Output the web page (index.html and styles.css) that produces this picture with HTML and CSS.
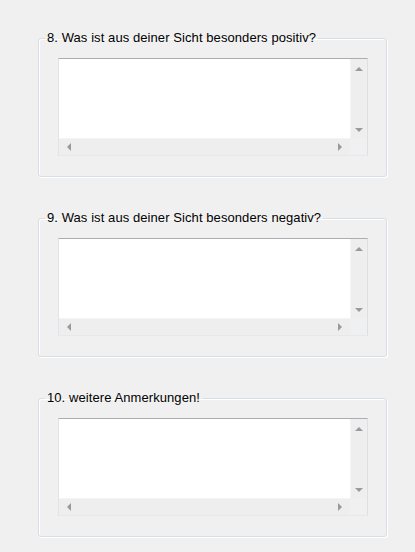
FILE: index.html
```html
<!DOCTYPE html>
<html lang="de">
<head>
    <meta charset="UTF-8">
    <title>Fragebogen</title>
    <link rel="stylesheet" href="styles.css">
</head>
<body>
    <div class="page">
        <fieldset class="group">
            <legend>8. Was ist aus deiner Sicht besonders positiv?</legend>
            <div class="memo">
                <div class="memo-text"></div>
                <div class="vbar"><span class="arr up"></span><span class="arr down"></span></div>
                <div class="hbar"><span class="arr left"></span><span class="arr right"></span></div>
                <div class="corner"></div>
            </div>
        </fieldset>

        <fieldset class="group">
            <legend>9. Was ist aus deiner Sicht besonders negativ?</legend>
            <div class="memo">
                <div class="memo-text"></div>
                <div class="vbar"><span class="arr up"></span><span class="arr down"></span></div>
                <div class="hbar"><span class="arr left"></span><span class="arr right"></span></div>
                <div class="corner"></div>
            </div>
        </fieldset>

        <fieldset class="group">
            <legend>10. weitere Anmerkungen!</legend>
            <div class="memo">
                <div class="memo-text"></div>
                <div class="vbar"><span class="arr up"></span><span class="arr down"></span></div>
                <div class="hbar"><span class="arr left"></span><span class="arr right"></span></div>
                <div class="corner"></div>
            </div>
        </fieldset>
    </div>
</body>
</html>
```

FILE: styles.css
```css
body {
    margin: 0;
    background-color: #f0f0f0;
    font-family: "Liberation Sans", Arial, sans-serif;
    font-size: 13px;
    color: #000;
}
.page {
    padding: 30px 0 0 38px;
}
.group {
    box-sizing: border-box;
    width: 349px;
    height: 147px;
    margin: 0 0 33px 0;
    padding: 12px 0 0 0;
    border: 1px solid #d5dfe5;
    border-radius: 3px;
    box-shadow: inset 1px 1px 0 #fff, 1px 1px 0 #fff;
}
.group legend {
    margin-left: 6px;
    padding: 0 2px;
    line-height: 16px;
    letter-spacing: 0.08px;
}
.memo {
    box-sizing: border-box;
    width: 310px;
    height: 98px;
    margin-left: 19px;
    display: grid;
    grid-template-columns: 1fr 17px;
    grid-template-rows: 1fr 17px;
    border: 1px solid;
    border-color: #abadb3 #dbdfe6 #e3e9ef #e2e3ea;
    background-color: #fff;
}
.memo-text {
    background-color: #fff;
}
.vbar {
    display: flex;
    flex-direction: column;
    justify-content: space-between;
    align-items: center;
    padding: 8px 0 6px;
    background-color: #eeeeee;
    border-left: 1px solid #f4f4f4;
}
.hbar {
    display: flex;
    justify-content: space-between;
    align-items: center;
    padding: 0 8px;
    background-color: #eeeeee;
    border-top: 1px solid #f4f4f4;
}
.corner {
    background-color: #f0f0f0;
}
.arr {
    width: 0;
    height: 0;
    border: 4px solid transparent;
}
.arr.up {
    border-top-width: 0;
    border-bottom: 4px solid #9a9a9a;
}
.arr.down {
    border-bottom-width: 0;
    border-top: 4px solid #9a9a9a;
}
.arr.left {
    border-left-width: 0;
    border-right: 4px solid #9a9a9a;
}
.arr.right {
    border-right-width: 0;
    border-left: 4px solid #9a9a9a;
}
```
